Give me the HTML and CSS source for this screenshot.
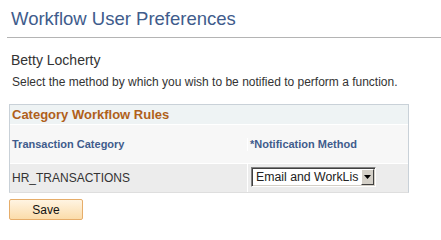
FILE: index.html
```html
<!DOCTYPE html>
<html>
<head>
<meta charset="utf-8">
<link rel="stylesheet" href="styles.css">
</head>
<body>
<div class="page">
  <h1 class="title">Workflow User Preferences</h1>
  <div class="rule"></div>
  <div class="name">Betty Locherty</div>
  <div class="instr">Select the method by which you wish to be notified to perform a function.</div>
  <div class="grid">
    <div class="grid-head">Category Workflow Rules</div>
    <div class="row hdr">
      <div class="c1">Transaction Category</div>
      <div class="c2">*Notification Method</div>
    </div>
    <div class="row data">
      <div class="c1">HR_TRANSACTIONS</div>
      <div class="c2">
        <div class="select">
          <span class="select-text">Email and WorkLis</span>
          <span class="select-btn"><svg width="7" height="4" viewBox="0 0 7 4"><polygon points="0,0 7,0 3.5,4" fill="#000"/></svg></span>
        </div>
      </div>
    </div>
  </div>
  <button class="save">Save</button>
</div>
</body>
</html>
```
FILE: styles.css
```css
html, body {
  margin: 0;
  padding: 0;
  background: #fff;
}
body {
  font-family: "Liberation Sans", Arial, sans-serif;
  color: #333;
}
.page {
  width: 441px;
}
.title {
  margin: 0;
  padding: 7px 0 6px 11px;
  font-size: 18.5px;
  line-height: 24px;
  font-weight: normal;
  color: #405c8c;
}
.rule {
  margin-left: 7px;
  height: 0;
  border-top: 1px solid #b4b4b4;
}
.name {
  margin-top: 14px;
  padding-left: 11px;
  font-size: 14px;
  line-height: 16px;
  color: #333;
}
.instr {
  margin-top: 7px;
  padding-left: 12px;
  font-size: 12px;
  line-height: 14px;
  color: #333;
}
.grid {
  margin: 15px 0 0 9px;
  width: 400px;
  box-sizing: border-box;
  border: 1px solid #c9d1d8;
  border-bottom: 1px solid #dedede;
}
.grid-head {
  height: 19px;
  line-height: 19px;
  padding-left: 2px;
  font-size: 13px;
  font-weight: bold;
  color: #b0601a;
  background: #eef3f4;
}
.row {
  display: flex;
  border-top: 1px solid #fff;
}
.c1 {
  width: 238px;
  border-right: 1px solid #fff;
  padding-left: 2px;
  box-sizing: border-box;
}
.c2 {
  flex: 1;
  padding-left: 2px;
}
.hdr {
  height: 38px;
  background: #f7f7f7;
  align-items: center;
  font-size: 11px;
  font-weight: bold;
  color: #3f5c8c;
  line-height: 13px;
}
.data {
  height: 28px;
  background: #ececec;
  font-size: 12px;
  line-height: 14px;
}
.data .c1 {
  padding-top: 7px;
  color: #333;
}
.data .c2 {
  padding: 3px 0 0 3px;
}
.select {
  width: 125px;
  height: 20px;
  box-sizing: border-box;
  border: 1px solid;
  border-color: #808080 #ffffff #ffffff #808080;
  box-shadow: inset 1px 1px 0 #404040, inset -1px -1px 0 #d4d0c8;
  background: #fff;
  display: flex;
  align-items: center;
  overflow: hidden;
  position: relative;
}
.select-text {
  padding-left: 4px;
  font-size: 12.3px;
  color: #222;
  white-space: nowrap;
}
.select-btn {
  position: absolute;
  right: 1px;
  top: 1px;
  width: 13px;
  height: 16px;
  box-sizing: border-box;
  background: #d4d0c8;
  border: 1px solid;
  border-color: #fff #404040 #404040 #fff;
  display: flex;
  align-items: center;
  justify-content: center;
}
.save {
  display: block;
  margin: 6px 0 0 9px;
  width: 74px;
  height: 21px;
  padding: 0;
  box-sizing: border-box;
  border: 1px solid #e6ad6a;
  border-radius: 2px;
  background: linear-gradient(#fff4e2, #fbdcaa);
  font-family: "Liberation Sans", Arial, sans-serif;
  font-size: 12px;
  color: #111;
}
```
